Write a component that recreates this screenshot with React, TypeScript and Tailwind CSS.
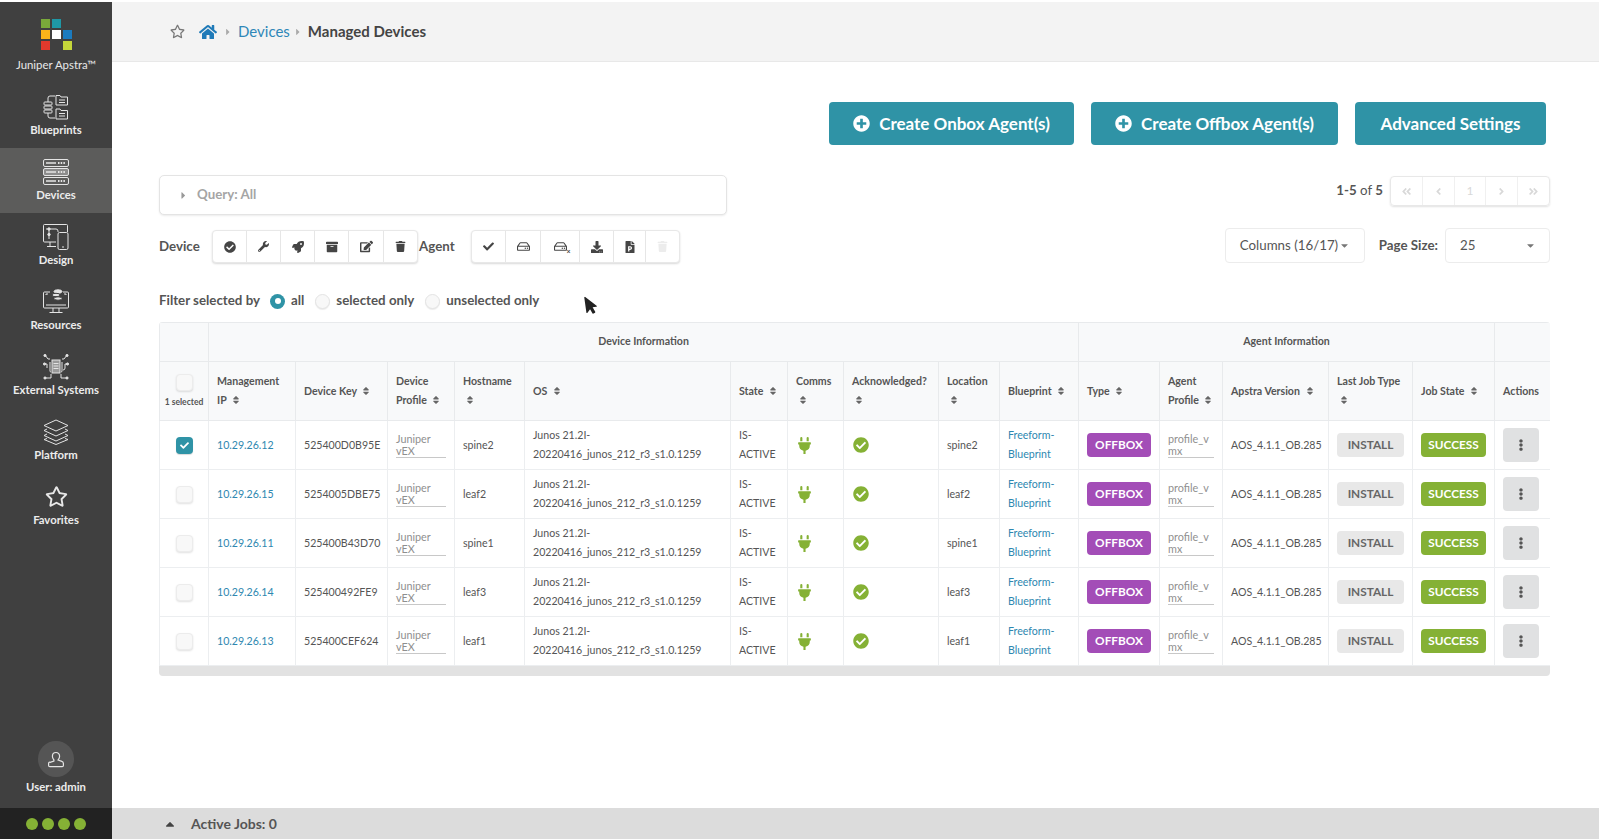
import type { ReactNode } from "react";
import {
  FaAngleDoubleLeft,
  FaAngleDoubleRight,
  FaAngleLeft,
  FaAngleRight,
  FaArchive,
  FaCaretDown,
  FaCaretRight,
  FaCaretUp,
  FaCheck,
  FaCheckCircle,
  FaDownload,
  FaEdit,
  FaEllipsisV,
  FaFilePowerpoint,
  FaHome,
  FaMousePointer,
  FaPlug,
  FaPlusCircle,
  FaRegHdd,
  FaRegStar,
  FaRocket,
  FaSort,
  FaTrash,
  FaWrench,
} from "react-icons/fa";

const ROWS = [
  { ip: "10.29.26.12", key: "525400D0B95E", host: "spine2", checked: true },
  { ip: "10.29.26.15", key: "5254005DBE75", host: "leaf2", checked: false },
  { ip: "10.29.26.11", key: "525400B43D70", host: "spine1", checked: false },
  { ip: "10.29.26.14", key: "525400492FE9", host: "leaf3", checked: false },
  { ip: "10.29.26.13", key: "525400CEF624", host: "leaf1", checked: false },
];

function NavSvg({ children }: { children: ReactNode }) {
  return (
    <svg width="26" height="26" viewBox="0 0 26 26" fill="none" stroke="#e4e4e4" strokeWidth="1">
      {children}
    </svg>
  );
}

const BlueprintsIcon = () => (
  <NavSvg>
    <rect x="1" y="8" width="8" height="3" rx="0.8" />
    <rect x="1" y="12" width="8" height="3" rx="0.8" />
    <rect x="1" y="16" width="8" height="3" rx="0.8" />
    <path d="M5 8V4q0-2 2-2h5M5 19v3q0 2 2 2h5" />
    <path d="M13 1.5h4l1 1.5h6.5v8H13zM13 15h4l1 1.5h6.5v8.5H13z" />
    <path d="M16 6h6M16 8.5h6M16 19.5h6M16 22h6" />
  </NavSvg>
);

const DevicesIcon = () => (
  <NavSvg>
    <rect x="0.5" y="0.5" width="25" height="7" rx="1.5" />
    <rect x="0.5" y="9.5" width="25" height="7" rx="1.5" fill="#8c8c8c" />
    <rect x="0.5" y="18.5" width="25" height="7" rx="1.5" />
    <path d="M3 4h10M3 13h10M3 22h10" strokeWidth="1.4" />
    <path d="M15 4h8M15 13h8M15 22h8" strokeWidth="2" strokeDasharray="1.5 1.2" />
  </NavSvg>
);

const DesignIcon = () => (
  <NavSvg>
    <path d="M13 18H1.5a1 1 0 0 1-1-1V1.5a1 1 0 0 1 1-1h22a1 1 0 0 1 1 1V8" />
    <path d="M7 18v4M4 22.5h9M3 5h10q2 0 2 2v1M6 5v4M6 12v3" />
    <circle cx="6" cy="5" r="1.2" fill="#e4e4e4" />
    <circle cx="6" cy="10.5" r="1.2" fill="#e4e4e4" />
    <rect x="15" y="8.5" width="10" height="17" rx="1.5" />
    <path d="M19 23h2" />
  </NavSvg>
);

const ResourcesIcon = () => (
  <NavSvg>
    <path d="M7 3H1.5a1 1 0 0 0-1 1v14a1 1 0 0 0 1 1h23a1 1 0 0 0 1-1V4a1 1 0 0 0-1-1H20" />
    <path d="M3 6V5h2M23 6V5h-2M3 16h20M10 19v4M16 19v4M6.5 23.5h13" />
    <ellipse cx="15" cy="2.5" rx="4" ry="1.7" fill="#e4e4e4" />
    <ellipse cx="13" cy="6" rx="4" ry="1.7" fill="#e4e4e4" stroke="#404040" />
    <ellipse cx="15" cy="9.5" rx="4" ry="1.7" fill="#e4e4e4" stroke="#404040" />
  </NavSvg>
);

const ExternalIcon = () => (
  <NavSvg>
    <rect x="9" y="6" width="8" height="13" fill="#9a9a9a" />
    <path d="M10.5 9.5h5M10.5 12h5M10.5 14.5h5" stroke="#e4e4e4" />
    <path d="M7 8v9a1 1 0 0 0 1 1M19 8v9a1 1 0 0 1-1 1" />
    <path d="M2 1l3 4h2M24 1l-3 4h-2M1 10h3v4M25 10h-3v4q0 2-2 2M2 24h6v-4M24 24h-6v-4" />
    <circle cx="2" cy="1.5" r="1.1" fill="#e4e4e4" />
    <circle cx="24" cy="1.5" r="1.1" fill="#e4e4e4" />
    <circle cx="1.5" cy="10" r="1.1" fill="#e4e4e4" />
    <circle cx="24.5" cy="10" r="1.1" fill="#e4e4e4" />
    <circle cx="2" cy="24" r="1.1" fill="#e4e4e4" />
    <circle cx="24" cy="24" r="1.1" fill="#e4e4e4" />
  </NavSvg>
);

const PlatformIcon = () => (
  <NavSvg>
    <path d="M13 1l12 5.5-12 5.5L1 6.5z" />
    <path d="M4 10l-3 1.5L13 17l12-5.5-3-1.5" />
    <path d="M4 15l-3 1.5L13 22l12-5.5-3-1.5" />
    <path d="M4 19.500l-3 1L13 25.500l12-5-3-1" />
  </NavSvg>
);

const UserIcon = () => (
  <svg width="16" height="17" viewBox="0 0 16 17" fill="none" stroke="#e4e4e4" strokeWidth="1.2">
    <path d="M8 1.5c-2.2 0-3.600 1.600-3.600 3.700 0 1.500.6 2.800 1.500 3.800v1l-3.700 1.400C1 10.800.6 11.700.6 12.500v2q0 1.200 1.200 1.200h12.400q1.200 0 1.200-1.200v-2c0-.8-.4-1.700-1.600-2.100l-3.700-1.400V9c.9-1 1.500-2.300 1.500-3.800 0-2.100-1.400-3.700-3.600-3.700z" />
  </svg>
);

function NavItem({ icon, label, active }: { icon: ReactNode; label: string; active?: boolean }) {
  return (
    <div className={`flex h-[65px] flex-col items-center pt-[11px] ${active ? "bg-[#5c5c5b]" : ""}`}>
      {icon}
      <span className="mt-[2px] text-[11.3px] leading-[16px] font-bold whitespace-nowrap text-[#ececec]">{label}</span>
    </div>
  );
}

function Sidebar() {
  return (
    <aside className="flex w-[112px] shrink-0 flex-col bg-[#404040]">
      <div className="flex h-[81px] flex-col items-center pt-[17px]">
        <svg width="31" height="31" viewBox="0 0 31 31">
          <rect x="0" y="0" width="9" height="9" fill="#79a93a" />
          <rect x="11" y="0" width="9" height="9" fill="#1f98a6" />
          <rect x="0" y="11" width="9" height="9" fill="#fbb41a" />
          <rect x="11" y="11" width="9" height="9" fill="#ffffff" />
          <rect x="22" y="11" width="9" height="9" fill="#1b7bbf" />
          <rect x="0" y="22" width="9" height="9" fill="#e2392c" />
          <rect x="22" y="22" width="9" height="9" fill="#c5d63a" />
        </svg>
        <span className="mt-[7px] text-[11.4px] leading-[16px] whitespace-nowrap text-[#e8e8e8]">Juniper Apstra™</span>
      </div>
      <NavItem icon={<BlueprintsIcon />} label="Blueprints" />
      <NavItem icon={<DevicesIcon />} label="Devices" active />
      <NavItem icon={<DesignIcon />} label="Design" />
      <NavItem icon={<ResourcesIcon />} label="Resources" />
      <NavItem icon={<ExternalIcon />} label="External Systems" />
      <NavItem icon={<PlatformIcon />} label="Platform" />
      <div className="flex flex-col items-center pt-[12px]">
        <FaRegStar size={23} color="#e8e8e8" />
        <span className="mt-[4px] text-[11.3px] leading-[16px] font-bold text-[#ececec]">Favorites</span>
      </div>
      <div className="mt-auto flex flex-col items-center pb-[13px]">
        <div className="flex h-[36px] w-[36px] items-center justify-center rounded-full bg-[#555555]">
          <UserIcon />
        </div>
        <span className="mt-[2px] text-[11.3px] leading-[16px] font-bold text-[#ececec]">User: admin</span>
      </div>
    </aside>
  );
}

function ToolCell({ width, children, last }: { width: string; children: ReactNode; last?: boolean }) {
  return (
    <div className={`flex h-full items-center justify-center text-[#454545] ${width} ${last ? "" : "border-r border-[#e6e6e6]"}`}>
      {children}
    </div>
  );
}

function Toolbar({ children }: { children: ReactNode }) {
  return (
    <div className="flex h-[33px] items-center rounded-[4px] border border-[#e8e8e8] bg-white shadow-[0_1px_2px_rgba(0,0,0,0.15)]">
      {children}
    </div>
  );
}

function PrimaryButton({ label, plus, width }: { label: string; plus?: boolean; width: string }) {
  return (
    <button
      type="button"
      className={`flex h-[43px] items-center justify-center gap-[9px] rounded-[4px] bg-[#2f93a6] text-[17px] font-bold text-white ${width}`}
    >
      {plus && <FaPlusCircle size={17} />}
      {label}
    </button>
  );
}

function Radio({ label, on }: { label: string; on?: boolean }) {
  return (
    <span className="flex items-center gap-[6px]">
      {on ? (
        <span className="flex h-[15px] w-[15px] items-center justify-center rounded-full bg-[#2f93a6]">
          <span className="h-[6px] w-[6px] rounded-full bg-white" />
        </span>
      ) : (
        <span className="h-[15px] w-[15px] rounded-full border border-[#e4e4e4] bg-[#f8f8f8] shadow-[0_1px_1px_rgba(0,0,0,0.08)]" />
      )}
      <span className="font-bold text-[#555555]">{label}</span>
    </span>
  );
}

function Checkbox({ checked }: { checked?: boolean }) {
  if (checked) {
    return (
      <span className="mx-auto flex h-[17px] w-[17px] items-center justify-center rounded-[4px] bg-[#2f93a6] text-white shadow-[0_1px_1px_rgba(0,0,0,0.15)]">
        <FaCheck size={9} />
      </span>
    );
  }
  return <span className="mx-auto block h-[17px] w-[17px] rounded-[4px] border border-[#ececec] bg-[#f8f8f8] shadow-[0_1px_2px_rgba(0,0,0,0.12)]" />;
}

function Head({ label, sort = true }: { label: string; sort?: boolean }) {
  return (
    <th className="border border-[#e8eaec] px-[8px] text-left text-[10.6px] leading-[18.67px] font-bold text-[#555555]">
      {label}
      {sort && (
        <>
          {" "}
          <FaSort size={10} className="ml-[2px] inline align-[-1px] text-[#666666]" />
        </>
      )}
    </th>
  );
}

function Badge({ label, className }: { label: string; className: string }) {
  return (
    <span className={`flex h-[24px] items-center justify-center rounded-[4px] text-[11.8px] font-bold ${className}`}>
      {label}
    </span>
  );
}

function UnderlinedField({ first, second }: { first: string; second: string }) {
  return (
    <div className="border-b border-[#c8c8c8] text-[10.8px] leading-[12px] text-[#8f8f8f]">
      {first}
      <br />
      {second}
    </div>
  );
}

function DevicesTable() {
  const cell = "border border-[#eceef0] px-[8px] text-[10.6px] leading-[18.67px]";
  return (
    <div className="overflow-hidden rounded-[4px] bg-[#e2e2e2] pb-[10px]">
      <table className="w-full table-fixed border-collapse bg-white">
        <colgroup>
          <col className="w-[49px]" />
          <col className="w-[87px]" />
          <col className="w-[92px]" />
          <col className="w-[67px]" />
          <col className="w-[70px]" />
          <col className="w-[206px]" />
          <col className="w-[57px]" />
          <col className="w-[56px]" />
          <col className="w-[95px]" />
          <col className="w-[61px]" />
          <col className="w-[79px]" />
          <col className="w-[81px]" />
          <col className="w-[63px]" />
          <col className="w-[106px]" />
          <col className="w-[84px]" />
          <col className="w-[82px]" />
          <col className="w-[56px]" />
        </colgroup>
        <thead className="bg-[#f8f9fa]">
          <tr className="h-[39px]">
            <th className="border border-[#e8eaec]" />
            <th colSpan={10} className="border border-[#e8eaec] text-[10.6px] font-bold text-[#555555]">
              Device Information
            </th>
            <th colSpan={5} className="border border-[#e8eaec] text-[10.6px] font-bold text-[#555555]">
              Agent Information
            </th>
            <th className="border border-[#e8eaec]" />
          </tr>
          <tr className="h-[59px]">
            <th className="border border-[#e8eaec]">
              <Checkbox />
              <div className="mt-[5px] text-[8.5px] leading-[12px] font-bold whitespace-nowrap text-[#555555]">1 selected</div>
            </th>
            <Head label="Management IP" />
            <Head label="Device Key" />
            <Head label="Device Profile" />
            <Head label="Hostname" />
            <Head label="OS" />
            <Head label="State" />
            <Head label="Comms" />
            <Head label="Acknowledged?" />
            <Head label="Location" />
            <Head label="Blueprint" />
            <Head label="Type" />
            <Head label="Agent Profile" />
            <Head label="Apstra Version" />
            <Head label="Last Job Type" />
            <Head label="Job State" />
            <Head label="Actions" sort={false} />
          </tr>
        </thead>
        <tbody className="text-[#555555]">
          {ROWS.map((row) => (
            <tr key={row.ip} className="h-[49px]">
              <td className="border border-[#eceef0]">
                <Checkbox checked={row.checked} />
              </td>
              <td className={`${cell} text-[#2e87b0]`}>{row.ip}</td>
              <td className={`${cell} whitespace-nowrap`}>{row.key}</td>
              <td className={cell}>
                <UnderlinedField first="Juniper" second="vEX" />
              </td>
              <td className={cell}>{row.host}</td>
              <td className={cell}>
                Junos 21.2I-
                <br />
                20220416_junos_212_r3_s1.0.1259
              </td>
              <td className={cell}>
                IS-
                <br />
                ACTIVE
              </td>
              <td className={cell}>
                <FaPlug size={17} className="text-[#85b135]" />
              </td>
              <td className={cell}>
                <FaCheckCircle size={16} className="ml-[1px] text-[#85b135]" />
              </td>
              <td className={cell}>{row.host}</td>
              <td className={`${cell} text-[#2e87b0]`}>
                Freeform-
                <br />
                Blueprint
              </td>
              <td className={cell}>
                <Badge label="OFFBOX" className="bg-[#a34db7] text-white" />
              </td>
              <td className={cell}>
                <UnderlinedField first="profile_v" second="mx" />
              </td>
              <td className={`${cell} whitespace-nowrap`}>AOS_4.1.1_OB.285</td>
              <td className={cell}>
                <Badge label="INSTALL" className="bg-[#e8e8e8] text-[#666666]" />
              </td>
              <td className={cell}>
                <Badge label="SUCCESS" className="bg-[#85b135] text-white" />
              </td>
              <td className={cell}>
                <span className="flex h-[34px] w-[36px] items-center justify-center rounded-[4px] bg-[#e0e1e2] text-[#555555]">
                  <FaEllipsisV size={12} />
                </span>
              </td>
            </tr>
          ))}
        </tbody>
      </table>
    </div>
  );
}

export default function App() {
  return (
    <div className="relative flex h-[839px] w-[1599px] flex-col overflow-hidden bg-white pt-[2px] [font-family:Lato,sans-serif] text-[#555555]">
      <div className="flex min-h-0 flex-1">
        <Sidebar />
        <main className="flex min-w-0 flex-1 flex-col">
          <header className="flex h-[60px] shrink-0 items-center border-b border-[#e8e8e8] bg-[#f3f3f3] pl-[58px] text-[15px]">
            <FaRegStar size={15} className="text-[#777777]" />
            <FaHome size={18} className="ml-[14px] text-[#1f7ab8]" />
            <FaCaretRight size={10} className="ml-[6px] text-[#aaaaaa]" />
            <span className="ml-[5px] text-[#2e87b8]">Devices</span>
            <FaCaretRight size={10} className="ml-[3px] text-[#aaaaaa]" />
            <span className="ml-[5px] font-bold text-[#444444]">Managed Devices</span>
          </header>

          <div className="flex flex-col pr-[49px] pl-[47px]">
            <div className="mt-[40px] flex justify-end gap-[17px] pr-[4px]">
              <PrimaryButton label="Create Onbox Agent(s)" plus width="w-[245px]" />
              <PrimaryButton label="Create Offbox Agent(s)" plus width="w-[247px]" />
              <PrimaryButton label="Advanced Settings" width="w-[191px]" />
            </div>

            <div className="mt-[30px] flex items-start justify-between">
              <div className="flex h-[40px] w-[568px] items-center rounded-[5px] border border-[#e4e4e4] bg-white pl-[18px] text-[13.3px] font-bold text-[#a5a5a5] shadow-[0_1px_2px_rgba(0,0,0,0.08)]">
                <FaCaretRight size={11} className="mr-[8px] text-[#999999]" />
                Query: All
              </div>
              <div className="mt-[1px] flex items-center gap-[7px] text-[13.3px]">
                <span>
                  <span className="font-bold">1-5</span> of <span className="font-bold">5</span>
                </span>
                <div className="flex h-[30px] w-[160px] items-center rounded-[4px] border border-[#e8e8e8] text-[#d8d8d8] shadow-[0_1px_2px_rgba(0,0,0,0.12)]">
                  <span className="flex h-full flex-1 items-center justify-center border-r border-[#f0f0f0]"><FaAngleDoubleLeft size={11} /></span>
                  <span className="flex h-full flex-1 items-center justify-center border-r border-[#f0f0f0]"><FaAngleLeft size={11} /></span>
                  <span className="flex h-full flex-1 items-center justify-center border-r border-[#f0f0f0] text-[12px]">1</span>
                  <span className="flex h-full flex-1 items-center justify-center border-r border-[#f0f0f0]"><FaAngleRight size={11} /></span>
                  <span className="flex h-full flex-1 items-center justify-center"><FaAngleDoubleRight size={11} /></span>
                </div>
              </div>
            </div>

            <div className="flex items-start justify-between">
              <div className="mt-[15px] flex items-center text-[13.3px] font-bold">
                <span className="w-[53px]">Device</span>
                <Toolbar>
                  <ToolCell width="w-[34px]"><FaCheckCircle size={12} /></ToolCell>
                  <ToolCell width="w-[34px]"><FaWrench size={11} /></ToolCell>
                  <ToolCell width="w-[34px]"><FaRocket size={12} /></ToolCell>
                  <ToolCell width="w-[34px]"><FaArchive size={12} /></ToolCell>
                  <ToolCell width="w-[35px]"><FaEdit size={13} /></ToolCell>
                  <ToolCell width="w-[33px]" last><FaTrash size={11} /></ToolCell>
                </Toolbar>
                <span className="ml-[1px] w-[52px]">Agent</span>
                <Toolbar>
                  <ToolCell width="w-[34px]"><FaCheck size={11} /></ToolCell>
                  <ToolCell width="w-[35px]"><FaRegHdd size={13} /></ToolCell>
                  <ToolCell width="w-[39px]">
                    <span className="relative">
                      <FaRegHdd size={13} />
                      <span className="absolute -right-[4px] -bottom-[2px] text-[7px] leading-[7px] font-bold">×</span>
                    </span>
                  </ToolCell>
                  <ToolCell width="w-[34px]"><FaDownload size={12} /></ToolCell>
                  <ToolCell width="w-[32px]"><FaFilePowerpoint size={12} /></ToolCell>
                  <ToolCell width="w-[33px]" last><FaTrash size={11} className="text-[#ececec]" /></ToolCell>
                </Toolbar>
              </div>
              <div className="mt-[13px] flex items-center text-[13.3px]">
                <div className="flex h-[35px] w-[140px] items-center justify-between rounded-[4px] border border-[#ececec] pr-[14px] pl-[14px] whitespace-nowrap">
                  Columns (16/17)
                  <FaCaretDown size={11} className="text-[#777777]" />
                </div>
                <span className="ml-[14px] font-bold">Page Size:</span>
                <div className="ml-[7px] flex h-[35px] w-[105px] items-center justify-between rounded-[4px] border border-[#ececec] pr-[13px] pl-[14px]">
                  25
                  <FaCaretDown size={11} className="text-[#777777]" />
                </div>
              </div>
            </div>

            <div className="mt-[28px] flex h-[20px] items-center text-[13.3px]">
              <span className="mr-[10px] font-bold">Filter selected by</span>
              <div className="flex items-center gap-[11px]">
                <Radio label="all" on />
                <Radio label="selected only" />
                <Radio label="unselected only" />
              </div>
            </div>

            <div className="mt-[11px]">
              <DevicesTable />
            </div>
          </div>
        </main>
      </div>

      <footer className="flex h-[31px] shrink-0 bg-[#dcdcdc]">
        <div className="flex w-[112px] items-center justify-center gap-[4px] bg-[#222222]">
          <span className="h-[12px] w-[12px] rounded-full bg-[#85b135]" />
          <span className="h-[12px] w-[12px] rounded-full bg-[#85b135]" />
          <span className="h-[12px] w-[12px] rounded-full bg-[#85b135]" />
          <span className="h-[12px] w-[12px] rounded-full bg-[#85b135]" />
        </div>
        <div className="flex items-center pl-[51px] text-[14px] font-bold text-[#555555]">
          <FaCaretUp size={14} className="mr-[14px] text-[#444444]" />
          Active Jobs: 0
        </div>
      </footer>

      <FaMousePointer size={18} className="absolute top-[296px] left-[582px] -rotate-[8deg] text-[#222222]" />
    </div>
  );
}
